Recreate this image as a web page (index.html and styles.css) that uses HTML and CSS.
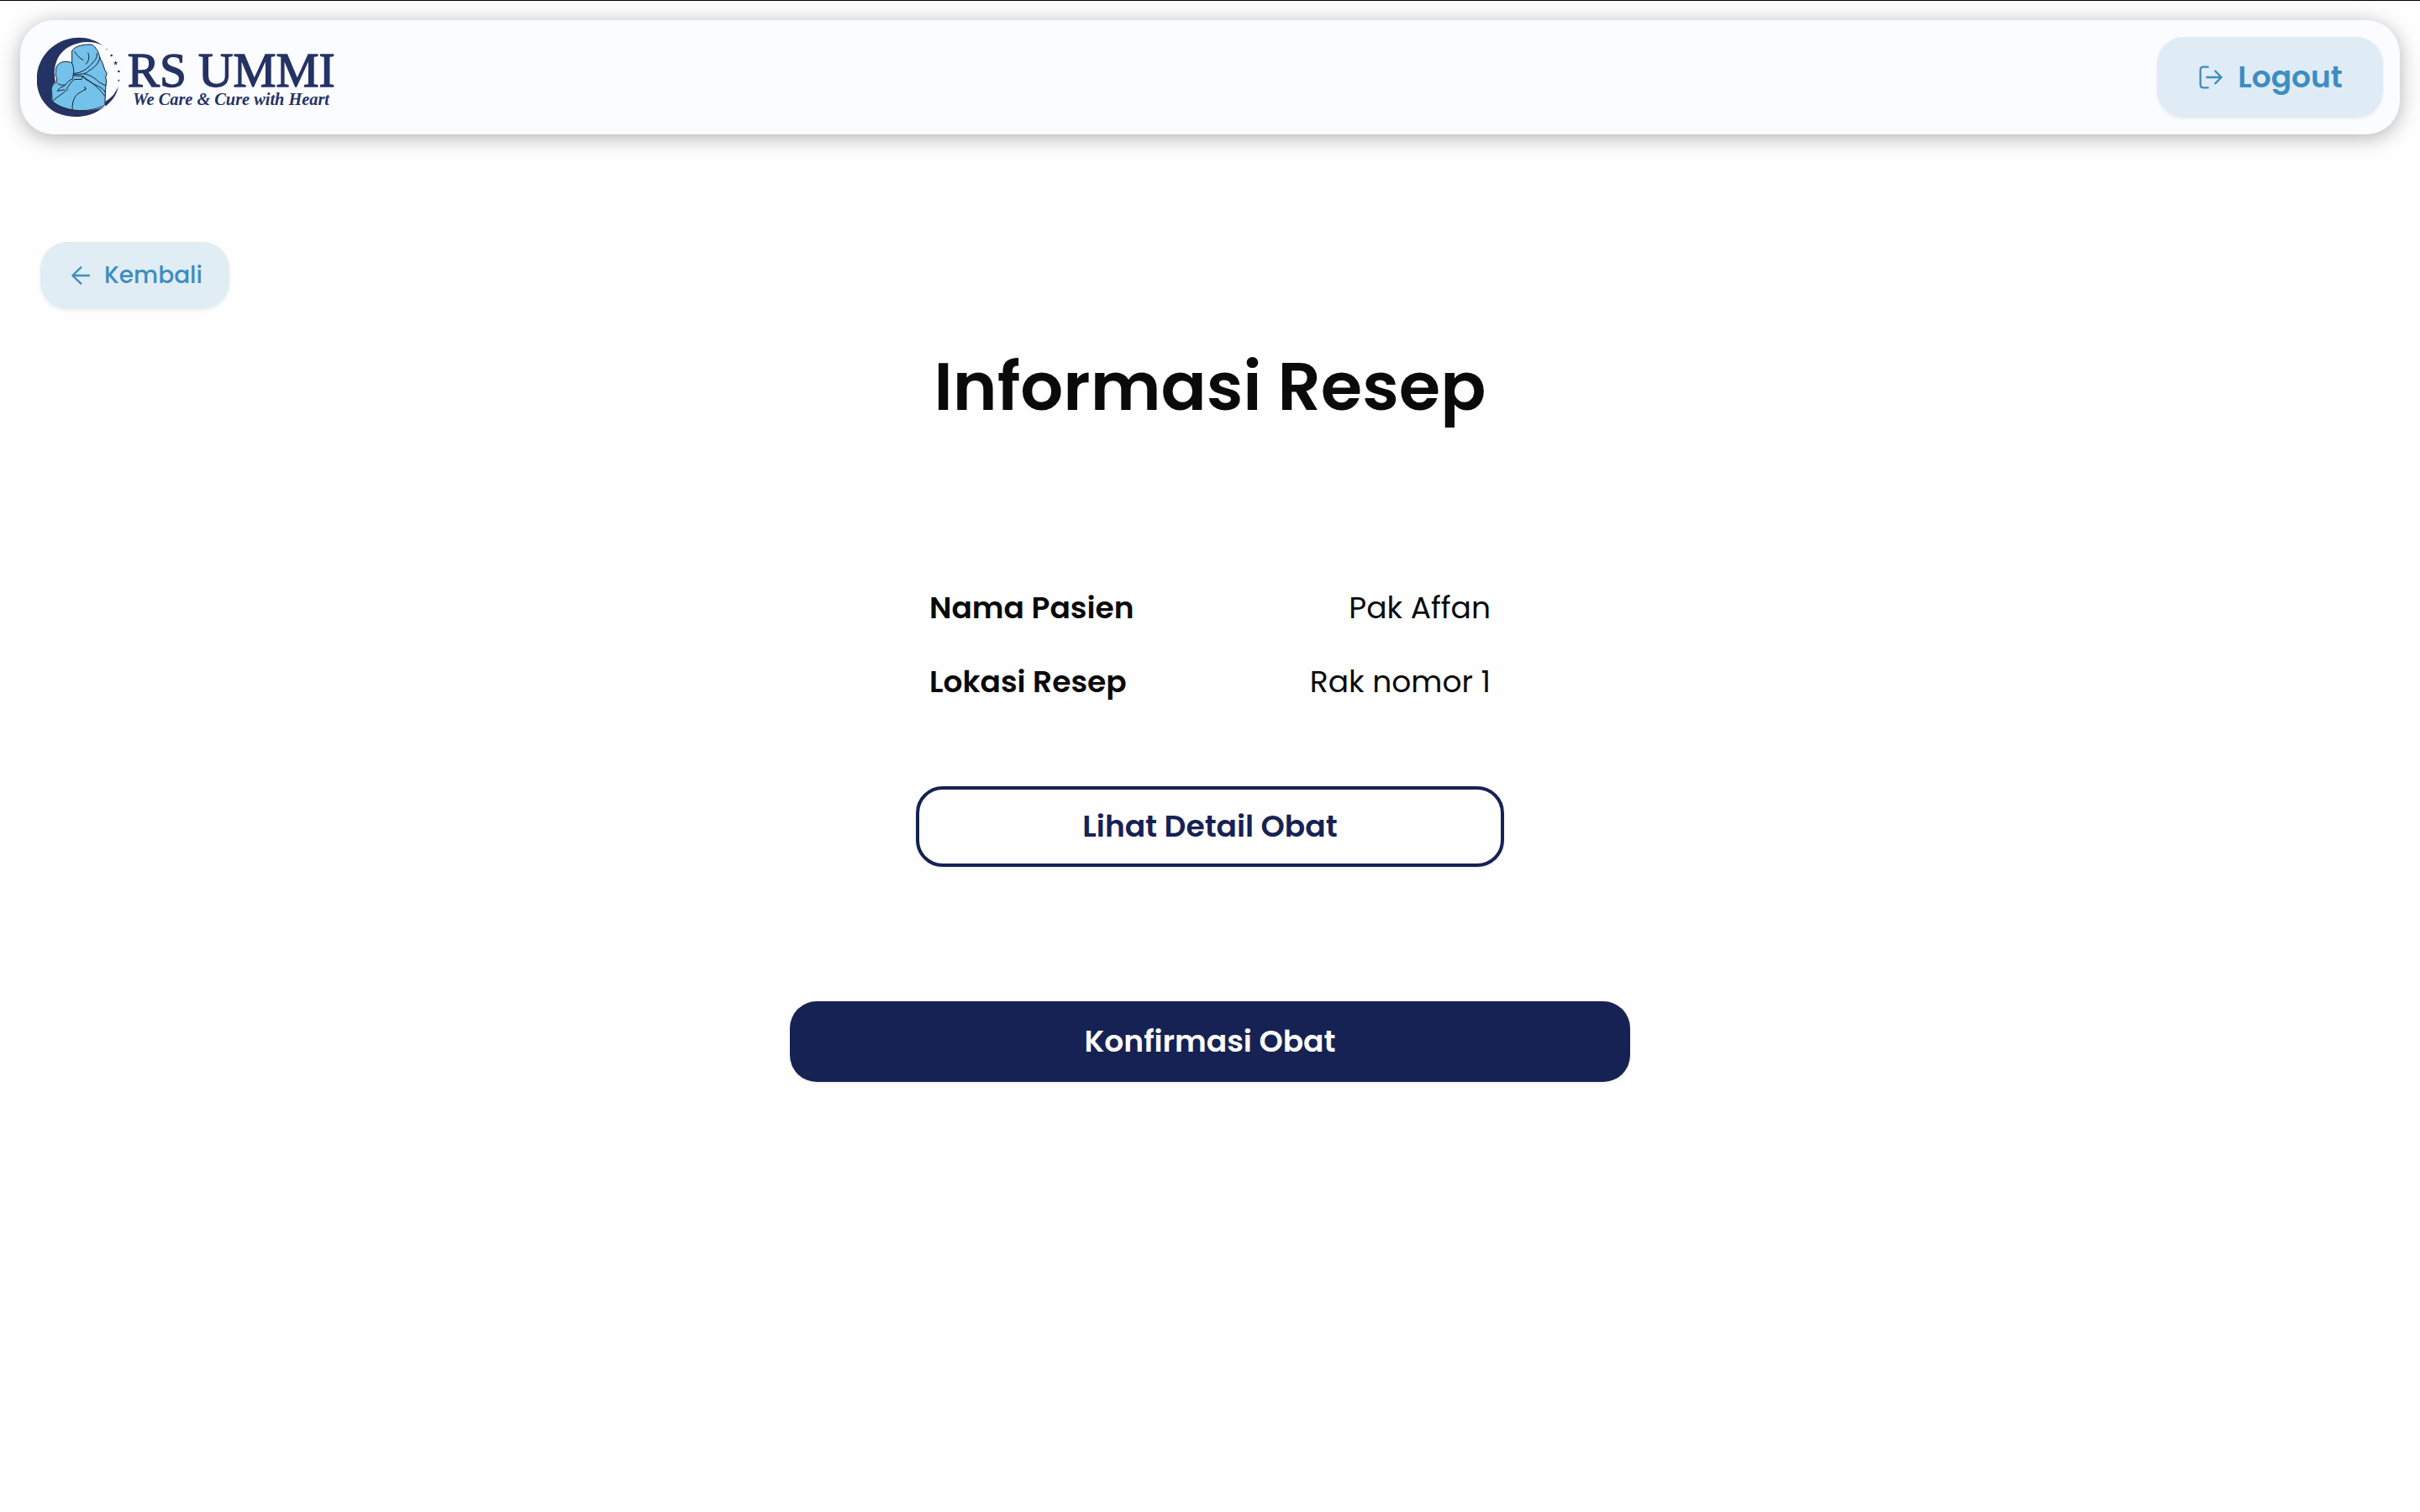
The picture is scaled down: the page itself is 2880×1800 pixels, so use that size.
FILE: index.html
```html
<!DOCTYPE html>
<html lang="id">
<head>
<meta charset="utf-8">
<meta name="viewport" content="width=device-width, initial-scale=1">
<title>Informasi Resep - RS UMMI</title>
<link rel="stylesheet" href="styles.css">
</head>
<body>
<header class="navbar">
  <a class="brand" href="#" aria-label="RS UMMI">
    <svg class="logo" viewBox="132 132 1068 288">
      <path class="navy" d="M368 163C320 126 250 124 198 160C114 214 109 335 182 391C220 421 300 428 352 395C395 372 417 342 423 307C412 333 397 352 376 362L375 380C330 402 230 402 185 360L184 318C184 308 190 300 198 292C186 235 206 190 246 167C286 146 330 144 368 163Z"/>
      <path class="sky" d="M257 226L257 182C264 168 290 158 322 159C337 160 341 172 350 184L355 200C356 210 363 216 367 227L374 250L382 262L377 276L380 289L377 314L375 362C376 372 374 377 366 380C310 404 232 400 186 361L185 329C180 310 189 302 202 292L203 280C197 270 199 264 200 256C196 236 214 219 236 220C248 220 254 223 257 226Z"/>
      <path class="line" d="M257 226C264 240 265 258 259 282M260 267C290 264 306 266 318 252C338 242 354 224 357 204M263 262C292 262 316 242 331 224C344 210 348 202 345 190M266 183C274 198 284 208 298 215M314 188C320 202 318 218 306 230M262 270L296 272C310 284 325 296 342 304C358 310 370 318 376 330M300 264C320 266 340 280 352 292C364 300 372 304 379 305M296 272L306 284C326 290 350 312 375 344M296 272L292 283L264 284C254 292 248 304 238 316M259 282C248 286 240 294 233 303C222 305 210 304 203 295M233 303C226 312 212 310 205 325L232 320M243 317C226 334 206 344 188 361M258 393C258 362 264 342 286 330C296 324 303 320 306 316M300 310L307 315L303 323"/>
      <path class="navy" d="M413 217l2 6 6 0-5 4 2 6-5-4-5 4 2-6-5-4 6 0z"/>
      <g class="navy"><circle cx="381" cy="176" r="2"/><circle cx="398" cy="198" r="4"/><circle cx="424" cy="255" r="4"/><circle cx="424" cy="287" r="3"/></g>
      <text class="logo-name" x="455" y="309">RS UMMI</text>
      <text class="logo-tagline" x="474" y="374">We Care &amp; Cure with Heart</text>
    </svg>
  </a>
  <button class="btn btn-soft btn-logout" type="button">
    <svg class="icon" viewBox="285 228 96 96" aria-hidden="true"><path d="M323 239H307Q296 239 296 250V302Q296 313 307 313H323M319 276H371M349 254L371 276L349 298"/></svg>
    Logout
  </button>
</header>
<main class="page">
  <button class="btn btn-soft btn-back" type="button">
    <svg class="icon" viewBox="240 156 96 96" aria-hidden="true"><path d="M318 204H259M289 175L259 204L289 233"/></svg>
    Kembali
  </button>
  <h1 class="title">Informasi Resep</h1>
  <section class="recipe">
    <dl class="details">
      <div class="detail"><dt>Nama Pasien</dt><dd>Pak Affan</dd></div>
      <div class="detail"><dt>Lokasi Resep</dt><dd>Rak nomor 1</dd></div>
    </dl>
    <button class="btn btn-outline" type="button">Lihat Detail Obat</button>
  </section>
  <button class="btn btn-primary" type="button">Konfirmasi Obat</button>
</main>
</body>
</html>
```
FILE: styles.css
```css
* {
  box-sizing: border-box;
}

body {
  margin: 0;
  min-height: 100vh;
  border-top: 1px solid #000;
  background: #fefefe;
  color: #0a0a0a;
  font-family: Poppins, Inter, sans-serif;
  font-size: 36px;
  line-height: 56px;
}

.navbar {
  display: flex;
  align-items: center;
  justify-content: space-between;
  margin: 23px 24px 0;
  padding: 20px;
  border-radius: 40px;
  background: #fbfcff;
  box-shadow: 0 4px 24px rgba(0, 0, 0, 0.3);
}

.brand,
.logo {
  display: block;
}

.logo {
  width: 356px;
  height: 96px;
}

.navy,
.logo-name,
.logo-tagline {
  fill: #243264;
}

.sky {
  fill: #74c1ec;
  stroke: #14212b;
  stroke-width: 3px;
}

.line {
  fill: none;
  stroke: #14212b;
  stroke-width: 3px;
}

.logo-name {
  font-family: "Liberation Serif", serif;
  font-size: 172px;
  stroke: #243264;
  stroke-width: 4px;
}

.logo-tagline {
  font-family: "Liberation Serif", serif;
  font-size: 61px;
  font-style: italic;
  font-weight: 700;
}

.btn {
  display: flex;
  align-items: center;
  justify-content: center;
  min-height: 96px;
  padding: 0 32px;
  border: 0;
  border-radius: 32px;
  font: inherit;
  font-weight: 600;
  cursor: pointer;
  box-shadow: 0 2px 4px rgba(0, 0, 0, 0.06);
}

.btn-soft {
  background: #dfebf5;
  color: #3d8dc0;
}

.btn-logout {
  gap: 16px;
  min-width: 269px;
}

.btn-back {
  align-self: flex-start;
  gap: 12px;
  min-width: 225px;
  min-height: 80px;
  background: #e1edf5;
  font-size: 28px;
  font-weight: 500;
}

.icon {
  width: 32px;
  height: 32px;
  fill: none;
  stroke: currentColor;
  stroke-width: 7px;
  stroke-linecap: round;
  stroke-linejoin: round;
}

.page {
  display: flex;
  flex-direction: column;
  align-items: center;
  padding: 128px 48px;
}

.title {
  margin: 48px 0 0;
  font-size: 80px;
  font-weight: 600;
  line-height: 88px;
}

.recipe {
  width: 100%;
  max-width: 700px;
  margin: 192px 0 160px;
}

.details {
  display: grid;
  gap: 32px;
  margin: 0 0 96px;
  padding: 0 16px;
}

.detail {
  display: flex;
  justify-content: space-between;
}

.detail dt {
  font-weight: 600;
}

.detail dd {
  margin: 0;
}

.btn-outline {
  width: 100%;
  border: 4px solid #162253;
  background: #fefefe;
  color: #162253;
}

.btn-primary {
  width: 100%;
  max-width: 1000px;
  background: #162253;
  color: #fff;
}
```
